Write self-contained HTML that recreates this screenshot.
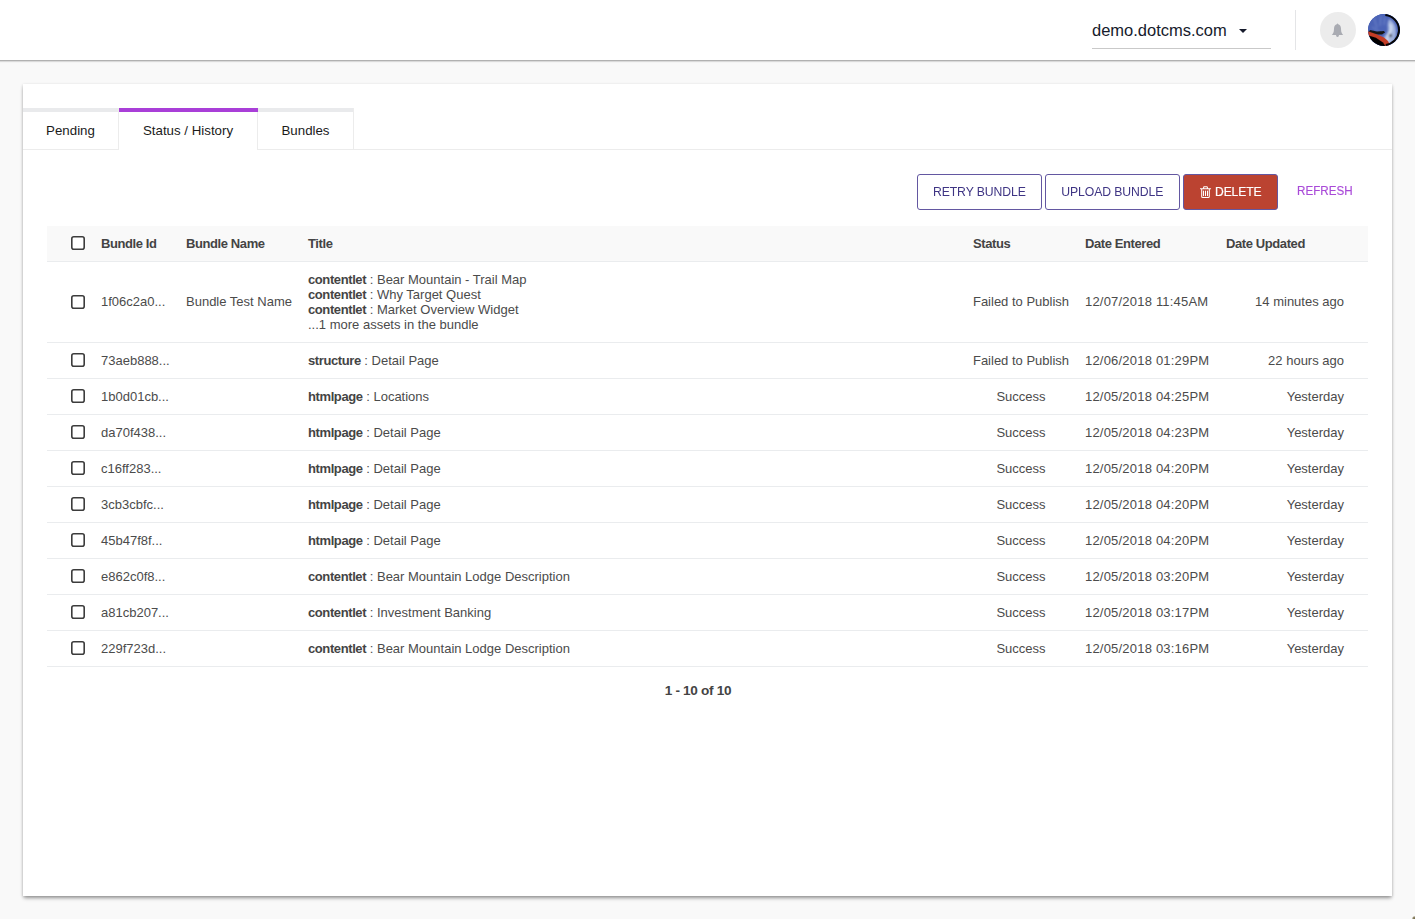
<!DOCTYPE html>
<html><head><meta charset="utf-8">
<style>
*{box-sizing:border-box;margin:0;padding:0}
html,body{width:1415px;height:919px;overflow:hidden}
body{background:#f9f9f9;font-family:"Liberation Sans",sans-serif;color:#555;position:relative}
.abs{position:absolute}
#hdr{left:0;top:0;width:1415px;height:60px;background:#fff;box-shadow:0 1px 0 rgba(0,0,0,.19),0 2px 1px rgba(0,0,0,.12)}
#site{left:1092px;top:21px;font-size:16.5px;color:#161b2c;white-space:nowrap}
#caret{left:1239px;top:29px;width:0;height:0;border-left:4px solid transparent;border-right:4px solid transparent;border-top:4px solid #161b2c}
#siteline{left:1092px;top:48px;width:179px;height:1px;background:#c9c9c9}
#sep{left:1295px;top:10px;width:1px;height:40px;background:#e4e5e7}
#bell{left:1320px;top:12px;width:36px;height:36px;border-radius:50%;background:#ececec}
#avatar{left:1368px;top:14px;width:32px;height:32px;border-radius:50%;overflow:hidden;background:#3b5bb0}
#card{left:23px;top:84px;width:1369px;height:812px;background:#fff;box-shadow:0 3px 4px -1px rgba(0,0,0,.33),0 1px 3px rgba(0,0,0,.2)}
.tab{top:108px;height:42px;font-size:13.3px;color:#1b1b1b;text-align:center;line-height:1}
.tab .bar{position:absolute;left:0;top:0;right:0;height:4px;background:#e9eaec}
.tab span{position:absolute;top:15.5px;left:0;right:0}
#tabline{left:258px;top:149px;width:1134px;height:1px;background:#ececec}
.btn{top:174px;height:36px;border:1px solid #6357a1;border-radius:3px;background:#fff;color:#3f3584;font-size:13px;text-align:center;line-height:34px;white-space:nowrap}
.sx{display:inline-block;transform:scaleX(.94);transform-origin:50% 50%;letter-spacing:-0.1px}
#thead{left:47px;top:226px;width:1321px;height:36px;background:#f9f9f9;border-bottom:1px solid #eaecee}
.th{font-size:13px;font-weight:bold;color:#444;letter-spacing:-0.4px;white-space:nowrap;top:236px}
.cb{width:14px;height:14px;display:block}
.row{left:47px;width:1321px;border-bottom:1px solid #eaecee}
.td{font-size:13px;color:#4b4b4b;white-space:nowrap}
.td b{color:#444;letter-spacing:-0.4px}
.st{left:971px;width:100px;text-align:center}
.dt{left:1085px;letter-spacing:0.2px}
.up{left:1194px;width:150px;text-align:right}
#pag{left:598px;width:200px;top:682.5px;text-align:center;font-size:13.6px;letter-spacing:-0.3px;font-weight:bold;color:#444}
</style></head><body>
<div id="hdr" class="abs"></div>
<div id="site" class="abs">demo.dotcms.com</div>
<div id="caret" class="abs"></div>
<div id="siteline" class="abs"></div>
<div id="sep" class="abs"></div>
<div id="bell" class="abs"><svg width="36" height="36" viewBox="0 0 36 36" style="position:absolute;left:0;top:0"><path d="M17.5 11.6C17.1 11.6 16.9 11.9 16.8 12.3C15.2 12.7 14.3 14 14.1 15.8L13.8 19.3C13.6 20.9 12.7 22 11.8 22.9H23.2C22.3 22 21.4 20.9 21.2 19.3L20.9 15.8C20.7 14 19.8 12.7 18.2 12.3C18.1 11.9 17.9 11.6 17.5 11.6ZM16 22.9L16.3 24.3C16.6 25.1 18.4 25.1 18.7 24.3L19 22.9Z" fill="#a9abb2"/></svg></div>
<div id="avatar" class="abs"><svg width="32" height="32" viewBox="0 0 32 32" style="position:absolute;left:0;top:0">
<defs><filter id="bl" x="-20%" y="-20%" width="140%" height="140%"><feGaussianBlur stdDeviation="0.9"/></filter>
<filter id="bl2" x="-20%" y="-20%" width="140%" height="140%"><feGaussianBlur stdDeviation="0.45"/></filter></defs>
<rect width="32" height="32" fill="#4b63b6"/>
<g filter="url(#bl)">
<path d="M6 4 L9 14 M13 2 L12 12 M4 13 L12 18 M17 3 L16 11" stroke="#8aa0d8" stroke-width="1" opacity="0.6"/>
<path d="M21 5 C25 7 28 11 28 16 C29 21 27 26 24 29 C21 31 17 30 15 27 C14 24 17 22 19 19 C21 16 19 12 20 8 Z" fill="#b9c9ea" opacity="0.8"/>
<path d="M22 10 C24 13 23 17 21 20 C19 23 18 26 21 28" stroke="#e4ecf8" stroke-width="2" fill="none" opacity="0.8"/>
<circle cx="22.5" cy="21.5" r="1.5" fill="#111"/>
</g>
<g filter="url(#bl2)">
<path d="M2 16 L9 17.5 L16 17 L17 18.5 L14 20.5 L6 20.5 L0 19 Z" fill="#151515"/>
<path d="M-1 17 L8 20 L16 23.5 L20 27 L23 33 L-1 33 Z" fill="#c33c27"/>
<path d="M-1 21 L8 23.7 L15 28.5 L18 33 L-1 33 Z" fill="#060606"/>
</g>
<circle cx="16" cy="16" r="15.1" fill="none" stroke="#060606" stroke-width="2.2" stroke-dasharray="44 100" transform="rotate(-85 16 16)"/>
</svg></div>

<div id="card" class="abs"></div>
<div id="tabline" class="abs"></div>
<div class="tab abs" style="left:23px;width:96px;border-right:1px solid #ececec;border-bottom:1px solid #ececec;background:#fff"><div class="bar"></div><span>Pending</span></div>
<div class="tab abs" style="left:119px;width:139px;border-right:1px solid #ececec;background:#fff"><div class="bar" style="background:#a93fd8;right:-1px"></div><span>Status / History</span></div>
<div class="tab abs" style="left:258px;width:96px;border-right:1px solid #ececec;border-bottom:1px solid #ececec;background:#fff"><div class="bar"></div><span>Bundles</span></div>

<div class="btn abs" style="left:917px;width:125px"><span class="sx">RETRY BUNDLE</span></div>
<div class="btn abs" style="left:1045px;width:135px"><span class="sx">UPLOAD BUNDLE</span></div>
<div class="btn abs" style="left:1183px;width:95px;background:#bb4331;color:#fff;font-size:12.6px;-webkit-text-stroke:0.2px #fff"><svg width="12" height="12" viewBox="0 0 12 12" style="position:absolute;left:16px;top:11px"><path d="M3.6 2.4V1.4Q3.6 .7 4.3 .7H6.7Q7.4 .7 7.4 1.4V2.4M.4 2.7H10.6M1.7 2.9V10.4Q1.7 11.4 2.7 11.4H8.3Q9.3 11.4 9.3 10.4V2.9M3.5 5.1V9.6M5.5 5.1V9.6M7.5 5.1V9.6" fill="none" stroke="#fff" stroke-width="1.05" stroke-linecap="round"/></svg><span style="position:absolute;left:30.5px;top:0;transform:scaleX(.96);transform-origin:0 50%;letter-spacing:-0.1px">DELETE</span></div>
<div class="abs" style="left:1297px;top:182.5px;font-size:13px;color:#a94ad8;transform:scaleX(.895);transform-origin:0 50%;-webkit-text-stroke:0.15px #a94ad8;white-space:nowrap">REFRESH</div>

<div id="thead" class="abs"></div>
<svg class="cb abs" style="left:71px;top:236px" width="14" height="14"><rect x=".8" y=".8" width="12.4" height="12.4" rx="2" fill="#fff" stroke="#3c3c3c" stroke-width="1.6"/></svg>
<div class="th abs" style="left:101px">Bundle Id</div>
<div class="th abs" style="left:186px">Bundle Name</div>
<div class="th abs" style="left:308px">Title</div>
<div class="th abs" style="left:973px">Status</div>
<div class="th abs" style="left:1085px">Date Entered</div>
<div class="th abs" style="left:1226px">Date Updated</div>

<!--ROWS-->
<div class="row abs" style="top:262px;height:81px"></div>
<svg class="cb abs" style="left:71px;top:295px" width="14" height="14"><rect x=".8" y=".8" width="12.4" height="12.4" rx="2" fill="#fff" stroke="#3c3c3c" stroke-width="1.6"/></svg>
<div class="td abs" style="left:101px;top:294px">1f06c2a0...</div>
<div class="td abs" style="left:186px;top:294px">Bundle Test Name</div>
<div class="td abs tt" style="left:308px;top:272px;line-height:15px"><b>contentlet</b> : Bear Mountain - Trail Map<br><b>contentlet</b> : Why Target Quest<br><b>contentlet</b> : Market Overview Widget<br>...1 more assets in the bundle</div>
<div class="td abs st" style="top:294px">Failed to Publish</div>
<div class="td abs dt" style="top:294px">12/07/2018 11:45AM</div>
<div class="td abs up" style="top:294px">14 minutes ago</div>
<div class="row abs" style="top:343px;height:36px"></div>
<svg class="cb abs" style="left:71px;top:353px" width="14" height="14"><rect x=".8" y=".8" width="12.4" height="12.4" rx="2" fill="#fff" stroke="#3c3c3c" stroke-width="1.6"/></svg>
<div class="td abs" style="left:101px;top:353px">73aeb888...</div>
<div class="td abs tt" style="left:308px;top:353px"><b>structure</b> : Detail Page</div>
<div class="td abs st" style="top:353px">Failed to Publish</div>
<div class="td abs dt" style="top:353px">12/06/2018 01:29PM</div>
<div class="td abs up" style="top:353px">22 hours ago</div>
<div class="row abs" style="top:379px;height:36px"></div>
<svg class="cb abs" style="left:71px;top:389px" width="14" height="14"><rect x=".8" y=".8" width="12.4" height="12.4" rx="2" fill="#fff" stroke="#3c3c3c" stroke-width="1.6"/></svg>
<div class="td abs" style="left:101px;top:389px">1b0d01cb...</div>
<div class="td abs tt" style="left:308px;top:389px"><b>htmlpage</b> : Locations</div>
<div class="td abs st" style="top:389px">Success</div>
<div class="td abs dt" style="top:389px">12/05/2018 04:25PM</div>
<div class="td abs up" style="top:389px">Yesterday</div>
<div class="row abs" style="top:415px;height:36px"></div>
<svg class="cb abs" style="left:71px;top:425px" width="14" height="14"><rect x=".8" y=".8" width="12.4" height="12.4" rx="2" fill="#fff" stroke="#3c3c3c" stroke-width="1.6"/></svg>
<div class="td abs" style="left:101px;top:425px">da70f438...</div>
<div class="td abs tt" style="left:308px;top:425px"><b>htmlpage</b> : Detail Page</div>
<div class="td abs st" style="top:425px">Success</div>
<div class="td abs dt" style="top:425px">12/05/2018 04:23PM</div>
<div class="td abs up" style="top:425px">Yesterday</div>
<div class="row abs" style="top:451px;height:36px"></div>
<svg class="cb abs" style="left:71px;top:461px" width="14" height="14"><rect x=".8" y=".8" width="12.4" height="12.4" rx="2" fill="#fff" stroke="#3c3c3c" stroke-width="1.6"/></svg>
<div class="td abs" style="left:101px;top:461px">c16ff283...</div>
<div class="td abs tt" style="left:308px;top:461px"><b>htmlpage</b> : Detail Page</div>
<div class="td abs st" style="top:461px">Success</div>
<div class="td abs dt" style="top:461px">12/05/2018 04:20PM</div>
<div class="td abs up" style="top:461px">Yesterday</div>
<div class="row abs" style="top:487px;height:36px"></div>
<svg class="cb abs" style="left:71px;top:497px" width="14" height="14"><rect x=".8" y=".8" width="12.4" height="12.4" rx="2" fill="#fff" stroke="#3c3c3c" stroke-width="1.6"/></svg>
<div class="td abs" style="left:101px;top:497px">3cb3cbfc...</div>
<div class="td abs tt" style="left:308px;top:497px"><b>htmlpage</b> : Detail Page</div>
<div class="td abs st" style="top:497px">Success</div>
<div class="td abs dt" style="top:497px">12/05/2018 04:20PM</div>
<div class="td abs up" style="top:497px">Yesterday</div>
<div class="row abs" style="top:523px;height:36px"></div>
<svg class="cb abs" style="left:71px;top:533px" width="14" height="14"><rect x=".8" y=".8" width="12.4" height="12.4" rx="2" fill="#fff" stroke="#3c3c3c" stroke-width="1.6"/></svg>
<div class="td abs" style="left:101px;top:533px">45b47f8f...</div>
<div class="td abs tt" style="left:308px;top:533px"><b>htmlpage</b> : Detail Page</div>
<div class="td abs st" style="top:533px">Success</div>
<div class="td abs dt" style="top:533px">12/05/2018 04:20PM</div>
<div class="td abs up" style="top:533px">Yesterday</div>
<div class="row abs" style="top:559px;height:36px"></div>
<svg class="cb abs" style="left:71px;top:569px" width="14" height="14"><rect x=".8" y=".8" width="12.4" height="12.4" rx="2" fill="#fff" stroke="#3c3c3c" stroke-width="1.6"/></svg>
<div class="td abs" style="left:101px;top:569px">e862c0f8...</div>
<div class="td abs tt" style="left:308px;top:569px"><b>contentlet</b> : Bear Mountain Lodge Description</div>
<div class="td abs st" style="top:569px">Success</div>
<div class="td abs dt" style="top:569px">12/05/2018 03:20PM</div>
<div class="td abs up" style="top:569px">Yesterday</div>
<div class="row abs" style="top:595px;height:36px"></div>
<svg class="cb abs" style="left:71px;top:605px" width="14" height="14"><rect x=".8" y=".8" width="12.4" height="12.4" rx="2" fill="#fff" stroke="#3c3c3c" stroke-width="1.6"/></svg>
<div class="td abs" style="left:101px;top:605px">a81cb207...</div>
<div class="td abs tt" style="left:308px;top:605px"><b>contentlet</b> : Investment Banking</div>
<div class="td abs st" style="top:605px">Success</div>
<div class="td abs dt" style="top:605px">12/05/2018 03:17PM</div>
<div class="td abs up" style="top:605px">Yesterday</div>
<div class="row abs" style="top:631px;height:36px"></div>
<svg class="cb abs" style="left:71px;top:641px" width="14" height="14"><rect x=".8" y=".8" width="12.4" height="12.4" rx="2" fill="#fff" stroke="#3c3c3c" stroke-width="1.6"/></svg>
<div class="td abs" style="left:101px;top:641px">229f723d...</div>
<div class="td abs tt" style="left:308px;top:641px"><b>contentlet</b> : Bear Mountain Lodge Description</div>
<div class="td abs st" style="top:641px">Success</div>
<div class="td abs dt" style="top:641px">12/05/2018 03:16PM</div>
<div class="td abs up" style="top:641px">Yesterday</div>
<div class="abs" id="pag">1 - 10 of 10</div>
<!--/ROWS-->
<div class="abs" style="left:1412px;top:916px;width:4px;height:4px;border-radius:50%;background:radial-gradient(circle at 70% 70%,#6f6848 0,#8d8566 45%,rgba(249,249,249,0) 80%)"></div>
</body></html>
